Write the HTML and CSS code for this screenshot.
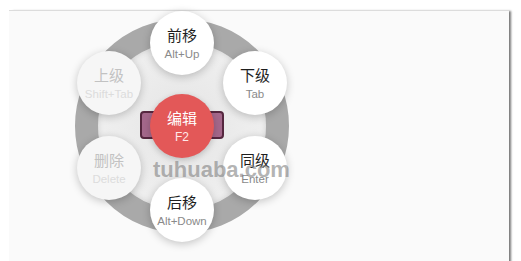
FILE: index.html
```html
<!DOCTYPE html>
<html>
<head>
<meta charset="utf-8">
<link rel="stylesheet" href="styles.css">
</head>
<body>
<div class="panel">
  <div class="wheel">
    <div class="ring"></div>
    <div class="node n-top"><span class="t">前移</span><span class="k">Alt+Up</span></div>
    <div class="node n-tr"><span class="t">下级</span><span class="k">Tab</span></div>
    <div class="node n-br"><span class="t">同级</span><span class="k">Enter</span></div>
    <div class="node n-bot"><span class="t">后移</span><span class="k">Alt+Down</span></div>
    <div class="node n-tl off"><span class="t">上级</span><span class="k">Shift+Tab</span></div>
    <div class="node n-bl off"><span class="t">删除</span><span class="k">Delete</span></div>
    <div class="bar"></div>
    <div class="node center"><span class="t">编辑</span><span class="k">F2</span></div>
  </div>
  <div class="mark">tuhuaba.com</div>
</div>
</body>
</html>
```
FILE: styles.css
```css
html, body { margin: 0; padding: 0; background: #ffffff; }
body { font-family: "Liberation Sans", "Noto Sans CJK SC", sans-serif; }
.panel {
  position: relative;
  margin: 10px 0 0 9px;
  width: 500px;
  height: 260px;
  background: #fafafa;
  border-top: 1px solid #dcdcdc;
  box-shadow: 3px 0 2px -1px #7a7a7a;
  padding: 8px 0 0 66px;
  box-sizing: border-box;
}
.wheel { position: relative; width: 214px; height: 214px; }
.ring {
  position: absolute; inset: 0;
  border-radius: 50%;
  box-sizing: border-box;
  border: 23px solid #a9a9a9;
  background: radial-gradient(circle, #e4e4e4 0%, #ededed 55%, #f1f1f1 100%);
  box-shadow: inset 0 0 6px rgba(0,0,0,0.12);
}
.node {
  position: absolute;
  width: 64px; height: 64px;
  border-radius: 50%;
  background: #ffffff;
  box-shadow: 0 2px 8px rgba(0,0,0,0.22);
  display: flex; flex-direction: column; align-items: center; justify-content: center;
  gap: 4px;
}
.node .t { font-size: 15px; line-height: 18px; color: #1e1e1e; font-family: "Noto Sans CJK SC", sans-serif; }
.node .k { font-size: 11.5px; line-height: 13px; color: #8a8a8a; }
.node.off { background: #f6f6f6; }
.node.off .t { color: #c2c2c2; }
.node.off .k { color: #dcdcdc; }
.n-top { left: 75px; top: -8px; }
.n-bot { left: 75px; top: 159px; }
.n-tr { left: 148px; top: 32px; }
.n-br { left: 148px; top: 117px; }
.n-tl { left: 2px; top: 32px; }
.n-bl { left: 2px; top: 117px; }
.bar {
  position: absolute;
  left: 65px; top: 92px;
  width: 84px; height: 28px;
  box-sizing: border-box;
  border: 2px solid #55273f;
  border-radius: 4px;
  background: #a3678a;
}
.center { left: 75px; top: 75px; background: #e35858; box-shadow: 0 2px 6px rgba(0,0,0,0.2); }
.center .t { color: #ffffff; }
.center .k { color: #ffe9e9; font-size: 12px; }
.mark {
  position: absolute;
  left: 144px; top: 146px;
  font-family: "Liberation Sans", sans-serif;
  font-weight: bold;
  font-size: 22px;
  color: rgba(130,130,130,0.6);
}
```
